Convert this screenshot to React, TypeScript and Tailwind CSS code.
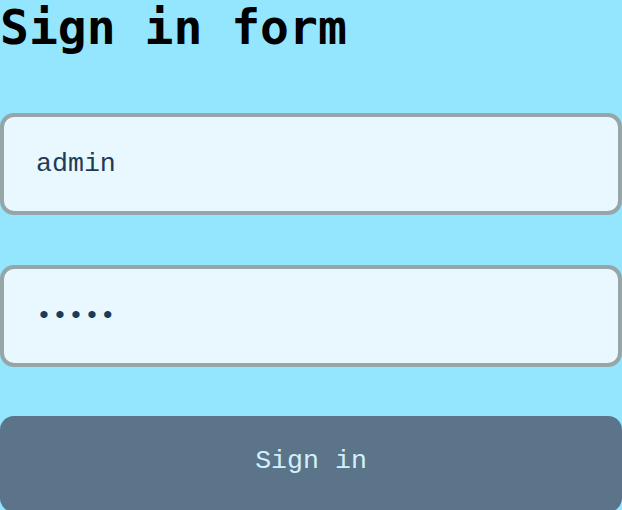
import React from "react";

export default function App() {
  return (
    <div className="w-[622px] h-[510px] bg-[#94e6ff] flex flex-col overflow-hidden">
      <h1 className="m-0 h-[113px] shrink-0 text-[48px] leading-[54px] font-bold text-black font-['DejaVu_Sans_Mono',monospace]">
        Sign in form
      </h1>
      <div className="flex flex-col">
        <input
          readOnly
          value="admin"
          className="h-[102px] w-full rounded-[14px] border-4 border-[#95a5a8] bg-[#e8f8fe] pl-[32px] text-[26.6px] text-[#1e3a56] outline-none font-['Liberation_Mono',monospace]"
        />
        <input
          readOnly
          type="password"
          value="admin"
          className="mt-[50px] h-[102px] w-full rounded-[14px] border-4 border-[#95a5a8] bg-[#e8f8fe] pl-[32px] text-[26.6px] text-[#1e3a56] outline-none font-['Liberation_Mono',monospace]"
        />
        <button className="mt-[49px] h-[96px] w-full rounded-[14px] bg-[#5b7489] pb-[4px] text-[26.6px] text-[#d2f0fb] font-['Liberation_Mono',monospace]">
          Sign in
        </button>
      </div>
    </div>
  );
}
